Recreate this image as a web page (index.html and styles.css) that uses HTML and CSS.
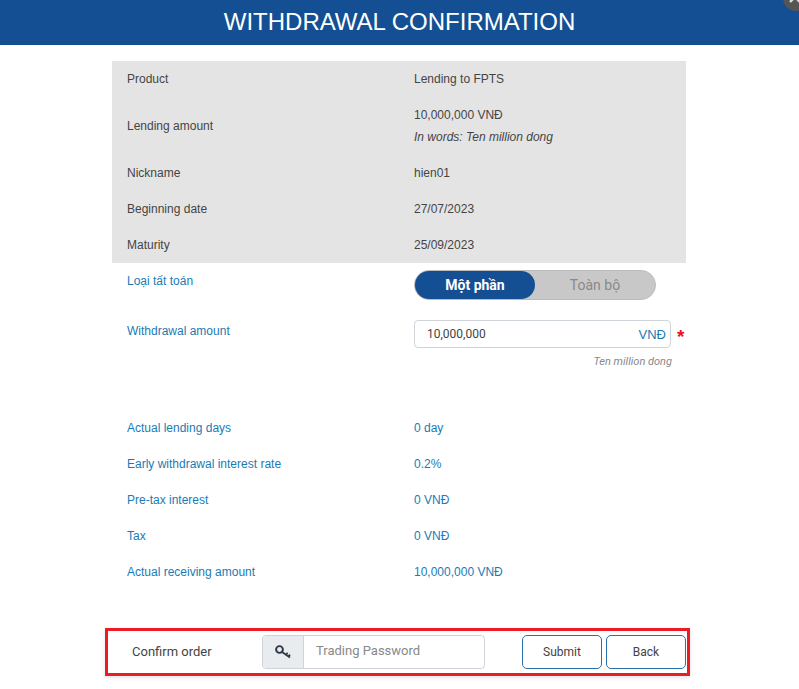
FILE: index.html
```html
<!DOCTYPE html>
<html lang="en">
<head>
    <meta charset="UTF-8">
    <meta name="viewport" content="width=device-width, initial-scale=1.0">
    <title>Withdrawal Confirmation</title>
    <link rel="stylesheet" href="styles.css">
</head>
<body>
    <!-- Header -->
    <div class="modal-header">WITHDRAWAL CONFIRMATION</div>
    <div class="close-btn">
        <svg width="26" height="26" viewBox="0 0 26 26" stroke="#ddd" stroke-width="2.4">
            <path d="M7 7l10 10M17 7L7 17"/>
        </svg>
    </div>

    <div class="content">
        <!-- Order summary -->
        <div class="summary">
            <div class="row"><div class="label">Product</div><div class="value">Lending to FPTS</div></div>
            <div class="row row-tall">
                <div class="label">Lending amount</div>
                <div class="value">
                    <div class="amount-line">10,000,000 VNĐ</div>
                    <div class="amount-line"><i>In words: Ten million dong</i></div>
                </div>
            </div>
            <div class="row"><div class="label">Nickname</div><div class="value">hien01</div></div>
            <div class="row"><div class="label">Beginning date</div><div class="value">27/07/2023</div></div>
            <div class="row"><div class="label">Maturity</div><div class="value">25/09/2023</div></div>
        </div>

        <!-- Withdrawal form -->
        <div class="form-row type-row">
            <div class="label blue">Loại tất toán</div>
            <div class="toggle">
                <div class="toggle-on">Một phần</div>
                <div class="toggle-off">Toàn bộ</div>
            </div>
        </div>
        <div class="form-row amount-row">
            <div class="label blue">Withdrawal amount</div>
            <div class="amount-field">
                <div class="amount-wrap">
                    <div class="amount-input"><span>10,000,000</span><span class="unit">VNĐ</span></div>
                    <span class="star">*</span>
                </div>
                <div class="words">Ten million dong</div>
            </div>
        </div>

        <div class="details">
            <div class="row"><div class="label blue">Actual lending days</div><div class="value blue">0 day</div></div>
            <div class="row"><div class="label blue">Early withdrawal interest rate</div><div class="value blue">0.2%</div></div>
            <div class="row"><div class="label blue">Pre-tax interest</div><div class="value blue">0 VNĐ</div></div>
            <div class="row"><div class="label blue">Tax</div><div class="value blue">0 VNĐ</div></div>
            <div class="row"><div class="label blue">Actual receiving amount</div><div class="value blue">10,000,000 VNĐ</div></div>
        </div>
    </div>

    <!-- Confirm bar -->
    <div class="confirm-bar">
        <div class="confirm-label">Confirm order</div>
        <div class="password-group">
            <div class="key-addon">
                <svg width="18" height="18" viewBox="0 0 18 18" fill="none" stroke="#2b3644">
                    <circle cx="5.5" cy="6.5" r="3.4" stroke-width="1.9"/>
                    <path d="M8 9l8 5.5M12 11.8l1.6-2M14.5 13.5l1.5-1.9" stroke-width="1.7"/>
                </svg>
            </div>
            <div class="password-input">Trading Password</div>
        </div>
        <button class="btn btn-submit">Submit</button>
        <button class="btn">Back</button>
    </div>
</body>
</html>
```

FILE: styles.css
```css
/* General Styles */
body {
    font-family: "Liberation Sans", Arial, sans-serif;
    font-size: 12px;
    color: #444;
    margin: 0;
    height: 689px;
    position: relative;
    overflow: hidden;
    background: #fff;
}

/* Header */
.modal-header {
    height: 45px;
    line-height: 43px;
    background: #134f92;
    color: #fff;
    text-align: center;
    font-size: 24px;
}

.close-btn {
    position: absolute;
    top: -15px;
    right: -10px;
    width: 26px;
    height: 26px;
    border-radius: 50%;
    background: #555;
}

/* Content */
.content {
    width: 574px;
    margin: 16px 0 0 112px;
}

.summary {
    background: #e4e4e4;
}

.row {
    display: flex;
    align-items: center;
    height: 36px;
}

.row-tall {
    height: 58px;
}

.label {
    width: 272px;
    padding-left: 15px;
    flex-shrink: 0;
}

.value {
    padding-left: 15px;
}

.amount-line {
    line-height: 22px;
}

.blue {
    color: #1a7bb5;
}

/* Form rows */
.form-row {
    display: flex;
    align-items: flex-start;
}

.type-row {
    height: 50px;
    padding-top: 7px;
    box-sizing: border-box;
}

.type-row .label {
    line-height: 22px;
}

.amount-row {
    height: 97px;
}

.amount-row .label {
    line-height: 22px;
    margin-top: 7px;
}

.toggle {
    margin-left: 15px;
    width: 242px;
    height: 30px;
    box-sizing: border-box;
    display: flex;
    border: 1px solid #bbb;
    border-radius: 15px;
    background: #c8c8c8;
    font-family: Roboto, sans-serif;
    font-size: 14px;
    line-height: 28px;
    text-align: center;
}

.toggle-on {
    width: 120px;
    background: #134f92;
    color: #fff;
    font-weight: bold;
    border-radius: 14px;
}

.toggle-off {
    flex: 1;
    color: #888;
}

.amount-field {
    margin-left: 15px;
    padding-top: 7px;
}

.amount-wrap {
    display: flex;
    align-items: center;
}

.amount-input {
    width: 257px;
    height: 28px;
    box-sizing: border-box;
    display: flex;
    justify-content: space-between;
    align-items: center;
    padding: 0 4px 0 12px;
    border: 1px solid #ced4da;
    border-radius: 4px;
    font-family: Roboto, sans-serif;
}

.unit {
    color: #1a7bb5;
    font-family: "Liberation Sans", Arial, sans-serif;
    font-size: 13px;
}

.star {
    color: #e8102a;
    font-size: 19px;
    font-weight: bold;
    margin-left: 6px;
    line-height: 16px;
    padding-top: 5px;
}

.words {
    width: 258px;
    text-align: right;
    font-family: Roboto, sans-serif;
    font-size: 11px;
    font-style: italic;
    color: #888;
    margin-top: 7px;
}

/* Confirm bar */
.confirm-bar {
    position: absolute;
    left: 105px;
    top: 628px;
    width: 585px;
    height: 48px;
    box-sizing: border-box;
    display: flex;
    align-items: center;
    border: 3px solid #ed1c24;
    box-shadow: 0 2px 4px rgba(0, 0, 0, 0.1);
    font-family: Roboto, sans-serif;
}

.confirm-label {
    width: 154px;
    padding-left: 24px;
    padding-bottom: 2px;
    box-sizing: border-box;
    font-size: 13px;
}

.password-group {
    display: flex;
    width: 223px;
    height: 34px;
    box-sizing: border-box;
    border: 1px solid #ced4da;
    border-radius: 4px;
    margin-right: 37px;
}

.key-addon {
    width: 40px;
    background: #e9ecef;
    border-right: 1px solid #ced4da;
    border-radius: 3px 0 0 3px;
    display: flex;
    align-items: center;
    justify-content: center;
}

.password-input {
    padding-left: 12px;
    line-height: 30px;
    font-size: 13px;
    color: #888;
}

.btn {
    width: 80px;
    height: 34px;
    background: #fff;
    border: 1px solid #2a72ae;
    border-radius: 5px;
    font-family: Roboto, sans-serif;
    font-size: 12px;
    color: #444;
    padding: 0;
}

.btn-submit {
    margin-right: 4px;
}
```
